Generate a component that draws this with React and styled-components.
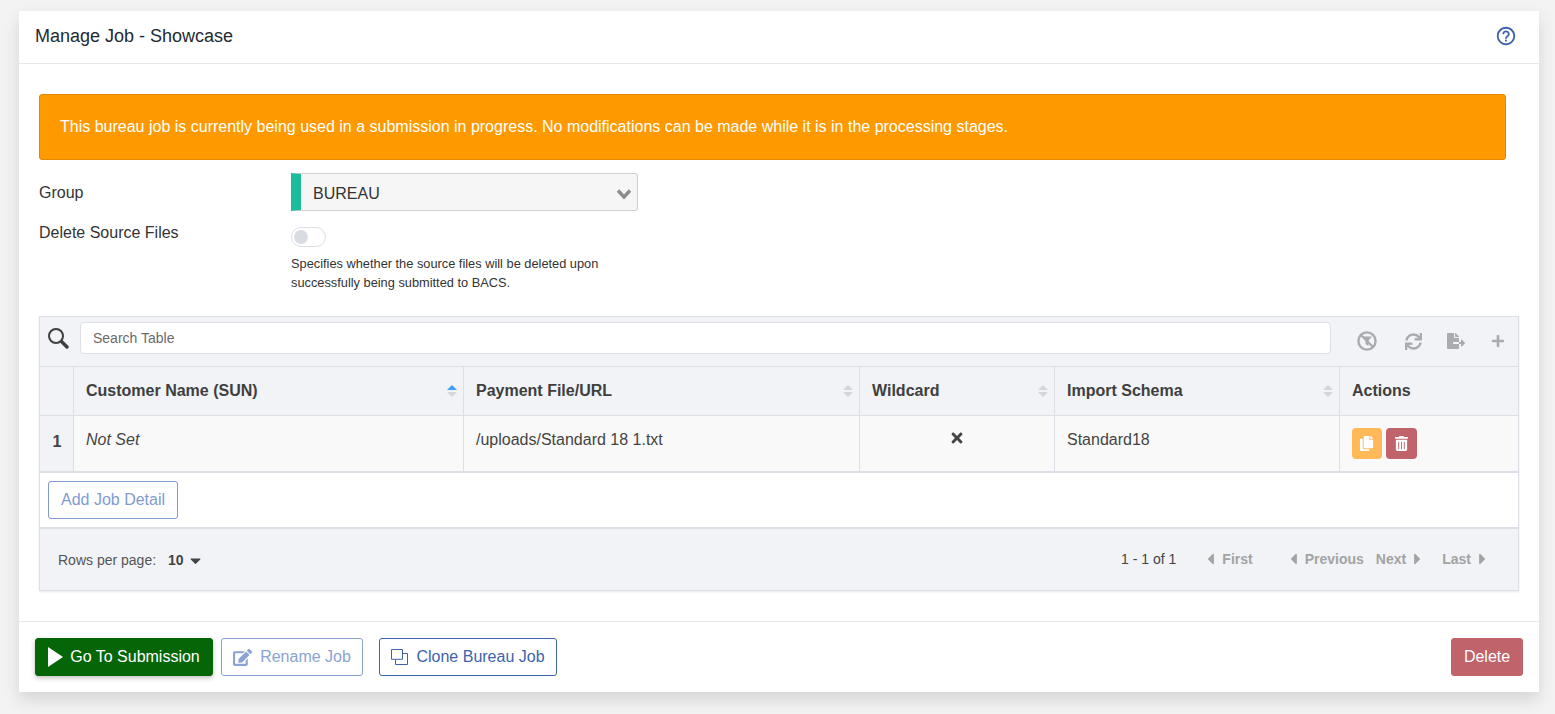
import React from 'react'
import styled, {createGlobalStyle} from 'styled-components'
import {FaSync, FaFileExport, FaPlus, FaTimes, FaCopy, FaTrashAlt, FaCaretDown, FaCaretLeft, FaCaretRight, FaEdit} from 'react-icons/fa'
import {MdHelpOutline} from 'react-icons/md'

const GlobalStyle = createGlobalStyle`
	html, body {
		margin: 0;
		background: #f3f3f3;
		font-family: "Liberation Sans", Arial, sans-serif;
		color: #3a3a3a;
	}
	* { box-sizing: border-box; }
`

const Page = styled.div`
	padding: 11px 16px 22px 19px;
	height: 714px;
	overflow: hidden;
`

const Card = styled.section`
	background: #fff;
	height: 681px;
	display: flex;
	flex-direction: column;
	box-shadow: 0 8px 16px rgba(0, 0, 0, 0.12);
`

const CardHeader = styled.header`
	display: flex;
	align-items: center;
	justify-content: space-between;
	height: 53px;
	padding: 0 22px 2px 16px;
	border-bottom: 1px solid #e8e8e8;
	font-size: 18px;
	color: #1f2a33;
	svg { color: #3e62ad; font-size: 22px; }
`

const CardBody = styled.div`
	flex: 1;
	padding: 30px 20px 0;
`

const Alert = styled.div`
	height: 66px;
	margin-right: 13px;
	padding-left: 20px;
	display: flex;
	align-items: center;
	background: #ff9900;
	border: 1px solid #e08a04;
	border-radius: 3px;
	color: #fff;
	font-size: 16px;
`

const FormRow = styled.div`
	display: flex;
	align-items: flex-start;
	margin-top: ${props => props.top || 0}px;
`

const Label = styled.label`
	width: 252px;
	font-size: 16px;
	line-height: 20px;
	color: #333;
	padding-top: ${props => props.top || 0}px;
`

const Select = styled.div`
	width: 347px;
	height: 38px;
	display: flex;
	align-items: center;
	justify-content: space-between;
	padding: 3px 5px 0 12px;
	background: #f6f6f6;
	border: 1px solid #cfcfcf;
	border-left: 10px solid #1abc9c;
	border-radius: 0 3px 3px 0;
	font-size: 16px;
	color: #333;
`

const Chevron = styled.svg`
	width: 16px;
	height: 12px;
	fill: none;
	stroke: #8c8c8c;
	stroke-width: 3.4;
`

const Toggle = styled.div`
	width: 35px;
	height: 20px;
	margin-top: 5px;
	border: 1px solid #dcdfe6;
	border-radius: 10px;
	padding: 2px;
	background: #fff;
	&::before {
		content: '';
		display: block;
		width: 14px;
		height: 14px;
		border-radius: 50%;
		background: #d9dce2;
	}
`

const Help = styled.p`
	margin: 7px 0 0;
	width: 340px;
	font-size: 12.8px;
	line-height: 19px;
	color: #333;
`

const Grid = styled.div`
	margin-top: 24px;
	border: 1px solid #dcdfe6;
	box-shadow: 0 1px 2px rgba(0, 0, 0, 0.1);
`

const Toolbar = styled.div`
	height: 49px;
	display: flex;
	align-items: flex-start;
	padding: 5px 13px 0 7px;
	background: #f1f3f7;
`

const SearchGlyph = styled.svg`
	width: 22px;
	height: 22px;
	margin-top: 5px;
	flex: none;
	color: #3f3f3f;
`

const SearchInput = styled.input`
	flex: 1;
	height: 32px;
	margin: 0 26px 0 11px;
	padding: 0 12px;
	border: 1px solid #dcdfe6;
	border-radius: 4px;
	background: #fff;
	font: 14px "Liberation Sans", Arial, sans-serif;
	&::placeholder { color: #6b6b6b; opacity: 1; }
`

const ToolIcons = styled.div`
	display: flex;
	align-items: center;
	margin-top: 9px;
	height: 20px;
	color: #a9abaf;
`

const ToolSlot = styled.span`
	width: ${props => props.w || 20}px;
	margin-left: ${props => props.ml || 0}px;
	display: flex;
	justify-content: center;
	font-size: ${props => props.size || 19}px;
`

const Table = styled.table`
	width: 100%;
	table-layout: fixed;
	border-collapse: collapse;
	border-bottom: 2px solid #dcdfe6;
`

const Th = styled.th`
	position: relative;
	height: 49px;
	padding: 0 12px 0 12.5px;
	background: #f1f3f7;
	border: 1px solid #dcdfe6;
	border-left: ${props => props.first ? '0' : '1px solid #dcdfe6'};
	border-right: ${props => props.last ? '0' : '1px solid #dcdfe6'};
	font-size: 16px;
	font-weight: 700;
	text-align: left;
	color: #3f3f3f;
`

const SortArrows = styled.span`
	position: absolute;
	right: 6px;
	top: 18px;
	display: flex;
	flex-direction: column;
	gap: 2px;
	&::before, &::after {
		content: '';
		width: 0;
		height: 0;
		border-left: 5px solid transparent;
		border-right: 5px solid transparent;
	}
	&::before { border-bottom: 5px solid ${props => props.active ? '#409eff' : '#d3d6dd'}; }
	&::after { border-top: 5px solid #d3d6dd; }
`

const Td = styled.td`
	height: 56px;
	padding: 0 12px ${props => props.num ? 2 : 7}px 12.5px;
	background: ${props => props.num ? '#f1f3f7' : '#f9f9f9'};
	border: 1px solid #dcdfe6;
	border-left: ${props => props.first ? '0' : '1px solid #dcdfe6'};
	border-right: ${props => props.last ? '0' : '1px solid #dcdfe6'};
	border-bottom: 0;
	font-size: 16px;
	color: #444;
	font-style: ${props => props.italic ? 'italic' : 'normal'};
	font-weight: ${props => props.num ? 700 : 400};
	text-align: ${props => props.center ? 'center' : 'left'};
`

const Actions = styled.div`
	display: flex;
	gap: 4px;
	margin-top: 8px;
	margin-left: -0.5px;
`

const IconButton = styled.button`
	width: ${props => props.w}px;
	height: 31px;
	padding: 0;
	display: flex;
	align-items: center;
	justify-content: center;
	border: 0;
	border-radius: 4px;
	background: ${props => props.bg};
	color: #fff;
	font-size: 15px;
`

const AddRow = styled.div`
	height: 56px;
	padding: 8px;
	border-bottom: 2px solid #dcdfe6;
`

const Button = styled.button`
	display: flex;
	align-items: center;
	justify-content: center;
	gap: ${props => props.gap || 0}px;
	height: 38px;
	width: ${props => props.w}px;
	margin-left: ${props => props.ml || 0}px;
	padding: 0;
	border: 1px solid ${props => props.border};
	border-radius: 3px;
	background: ${props => props.bg || '#fff'};
	color: ${props => props.color};
	font: 16px "Liberation Sans", Arial, sans-serif;
	box-shadow: ${props => props.raised ? '0 2px 5px rgba(0, 0, 0, 0.25)' : 'none'};
	svg { flex: none; }
`

const EditIcon = styled(FaEdit)`
	font-size: 19px;
`

const Pager = styled.div`
	height: 61px;
	display: flex;
	align-items: center;
	justify-content: space-between;
	padding: 0 32px 0 18px;
	background: #f1f3f7;
	font-size: 14px;
	color: #555;
`

const RowsPer = styled.div`
	display: flex;
	align-items: center;
	padding-top: 2px;
	b {
		margin-left: 12px;
		color: #444;
		display: flex;
		align-items: center;
		gap: 3px;
	}
	svg { font-size: 17px; }
`

const PageNav = styled.div`
	display: flex;
	align-items: center;
	font-size: 14px;
`

const PageCount = styled.span`
	margin-right: 31px;
	color: #444;
`

const PageLink = styled.span`
	display: inline-flex;
	align-items: center;
	gap: 8px;
	margin-left: ${props => props.ml || 0}px;
	color: #a3a3a3;
	font-weight: 700;
	svg { width: 7px; height: 18px; }
`

const CardFooter = styled.footer`
	height: 71px;
	display: flex;
	align-items: flex-start;
	justify-content: space-between;
	padding: 16px 16px 0;
	border-top: 1px solid #e8e8e8;
`

const ButtonGroup = styled.div`
	display: flex;
	align-items: flex-start;
`

const SearchIcon = () => (
	<SearchGlyph viewBox="0 0 22 22">
		<circle cx="9" cy="9" r="7" fill="none" stroke="currentColor" strokeWidth="2" />
		<path d="M14.5 14.5l5.5 5.5" stroke="currentColor" strokeWidth="3.4" strokeLinecap="round" />
	</SearchGlyph>
)

const FilterOff = () => (
	<svg width="20" height="20" viewBox="0 0 20 20">
		<circle cx="10" cy="10" r="8.6" fill="none" stroke="currentColor" strokeWidth="2.4" />
		<path d="M5 5.5h10l-3.6 4.2v5.2l-2.8-2V9.7z" fill="currentColor" />
		<path d="M4 4l12 12" stroke="currentColor" strokeWidth="2.2" />
	</svg>
)

const PlayIcon = () => (
	<svg width="15" height="20" viewBox="0 0 15 20">
		<path d="M0 0l15 10L0 20z" fill="currentColor" />
	</svg>
)

const CloneIcon = () => (
	<svg width="17" height="16" viewBox="0 0 17 16" fill="none" stroke="currentColor" strokeWidth="1">
		<path d="M.5.5h11v9.8H.5z" />
		<path d="M11.5 4.5h5v11H4.5v-5" />
	</svg>
)

const columns = [
	{title: 'Customer Name (SUN)', width: 390, active: true},
	{title: 'Payment File/URL', width: 396},
	{title: 'Wildcard', width: 195},
	{title: 'Import Schema', width: 285},
]

export default function App() {
	return (
		<Page>
			<GlobalStyle />
			<Card>
				<CardHeader>
					Manage Job - Showcase
					<MdHelpOutline />
				</CardHeader>
				<CardBody>
					<Alert>This bureau job is currently being used in a submission in progress. No modifications can be made while it is in the processing stages.</Alert>
					<FormRow top={13}>
						<Label top={10}>Group</Label>
						<Select>
							BUREAU
							<Chevron viewBox="0 0 16 12"><path d="M2 2.5l6 6.5 6-6.5" /></Chevron>
						</Select>
					</FormRow>
					<FormRow top={11}>
						<Label top={1}>Delete Source Files</Label>
						<div>
							<Toggle />
							<Help>Specifies whether the source files will be deleted upon successfully being submitted to BACS.</Help>
						</div>
					</FormRow>
					<Grid>
						<Toolbar>
							<SearchIcon />
							<SearchInput placeholder="Search Table" />
							<ToolIcons>
								<ToolSlot w={20}><FilterOff /></ToolSlot>
								<ToolSlot w={20} ml={26} size={17}><FaSync /></ToolSlot>
								<ToolSlot w={20} ml={23} size={18}><FaFileExport /></ToolSlot>
								<ToolSlot w={14} ml={25} size={14}><FaPlus /></ToolSlot>
							</ToolIcons>
						</Toolbar>
						<Table>
							<colgroup>
								<col width="33" />
								{columns.map(col => <col key={col.title} width={col.width} />)}
								<col />
							</colgroup>
							<thead>
								<tr>
									<Th first />
									{columns.map(col => (
										<Th key={col.title}>
											{col.title}
											<SortArrows active={col.active} />
										</Th>
									))}
									<Th last>Actions</Th>
								</tr>
							</thead>
							<tbody>
								<tr>
									<Td first num center>1</Td>
									<Td italic>Not Set</Td>
									<Td>/uploads/Standard 18 1.txt</Td>
									<Td center><FaTimes /></Td>
									<Td>Standard18</Td>
									<Td last>
										<Actions>
											<IconButton w={30} bg="#ffb957"><FaCopy /></IconButton>
											<IconButton w={31} bg="#c1636b"><FaTrashAlt /></IconButton>
										</Actions>
									</Td>
								</tr>
							</tbody>
						</Table>
						<AddRow>
							<Button w={130} border="#7f9bcf" color="#7f9bcf">Add Job Detail</Button>
						</AddRow>
						<Pager>
							<RowsPer>
								Rows per page:
								<b>10 <FaCaretDown /></b>
							</RowsPer>
							<PageNav>
								<PageCount>1 - 1 of 1</PageCount>
								<PageLink><FaCaretLeft />First</PageLink>
								<PageLink ml={37}><FaCaretLeft />Previous</PageLink>
								<PageLink ml={12}>Next<FaCaretRight /></PageLink>
								<PageLink ml={21}>Last<FaCaretRight /></PageLink>
							</PageNav>
						</Pager>
					</Grid>
				</CardBody>
				<CardFooter>
					<ButtonGroup>
						<Button w={178} gap={7} raised bg="#056608" border="#056608" color="#fff"><PlayIcon />Go To Submission</Button>
						<Button w={142} gap={8} ml={8} border="#8ba3d2" color="#8ba3d2"><EditIcon />Rename Job</Button>
						<Button w={178} gap={8} ml={16} border="#3e62ad" color="#3e62ad"><CloneIcon />Clone Bureau Job</Button>
					</ButtonGroup>
					<Button w={72} bg="#c1636b" border="#c1636b" color="#fff">Delete</Button>
				</CardFooter>
			</Card>
		</Page>
	)
}
